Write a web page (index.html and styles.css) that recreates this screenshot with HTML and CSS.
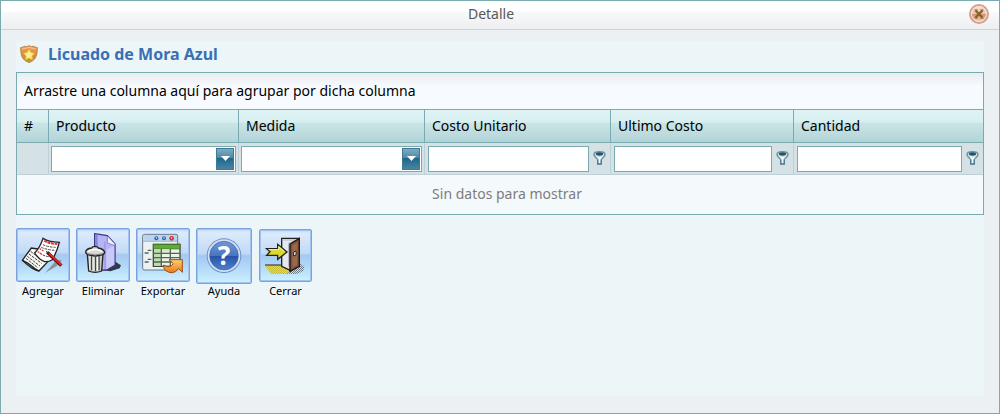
FILE: index.html
```html
<!DOCTYPE html>
<html lang="es">
<head>
  <meta charset="UTF-8" />
  <meta name="viewport" content="width=device-width, initial-scale=1" />
  <title>Detalle</title>
  <link rel="stylesheet" href="styles.css">
</head>
<body>

  <!-- Shared funnel icon for the filter row -->
  <svg class="sprites" aria-hidden="true">
    <symbol id="funnel" viewBox="0 0 13 14">
      <path d="M1 3.5C1 1.5 3.5 .8 6.5 .8S12 1.5 12 3.5C12 5.5 9.5 7.3 8.3 8.3V13H4.7V8.3C3.5 7.3 1 5.5 1 3.5Z" fill="#d3e2e8" stroke="#6d909f" stroke-width="1.4"/>
      <ellipse cx="6.5" cy="3" rx="3.6" ry="1.7" fill="#1d5570"/>
      <path d="M4.5 6L6.5 8L8.5 6M6.5 8V12" fill="none" stroke="#f4fafc" stroke-width="1.3"/>
      <path d="M4.7 9V13H8.3V9" fill="none" stroke="#4f7b8f" stroke-width="1.1"/>
    </symbol>
  </svg>

  <div class="dialog">
    <header class="titlebar">
      <h1>Detalle</h1>
      <button type="button" class="close" aria-label="Cerrar ventana">
        <svg viewBox="0 0 20 20" width="20" height="20" aria-hidden="true">
          <defs>
            <linearGradient id="closeFill" x1="0" y1="0" x2="0" y2="1">
              <stop offset="0" stop-color="#f6e4dd"/>
              <stop offset=".48" stop-color="#ecc3b3"/>
              <stop offset=".5" stop-color="#d08d74"/>
              <stop offset="1" stop-color="#f3d9ce"/>
            </linearGradient>
          </defs>
          <circle cx="10" cy="10" r="9" fill="url(#closeFill)" stroke="#d99f8b" stroke-width="2"/>
          <circle cx="10" cy="10" r="7.5" fill="none" stroke="#f7e6df" stroke-width="1"/>
          <path d="M6.5 6.5L13.5 13.5M13.5 6.5L6.5 13.5" stroke="#856222" stroke-width="2.2"/>
          <path d="M5.5 6H8.5M11.5 6H14.5M5.5 14H8.5M11.5 14H14.5" stroke="#856222" stroke-width="1"/>
        </svg>
      </button>
    </header>

    <main class="content">
      <h2 class="product">
        <svg viewBox="0 0 18 18" width="18" height="18" aria-hidden="true">
          <defs>
            <linearGradient id="shield" x1="0" y1="0" x2="0" y2="1">
              <stop offset="0" stop-color="#eda45c"/>
              <stop offset=".5" stop-color="#e08c38"/>
              <stop offset="1" stop-color="#b9982c"/>
            </linearGradient>
          </defs>
          <path d="M.7 2.5Q3 2.5 4.5 1.3Q6.5 2.3 9 .7Q11.5 2.3 13.5 1.3Q15 2.5 17.3 2.5C17.3 10 16 15.5 9 17.5C2 15.5 .7 10 .7 2.5Z" fill="url(#shield)" stroke="#bb8448" stroke-width="1"/>
          <path d="M2 4Q6 3.5 9 2.2Q12 3.5 16 4" fill="none" stroke="#f9c48a" stroke-width="1"/>
          <path d="M9 4.3L10.9 7.6L14.5 8.2L11.9 11L12.4 14.7L9 13L5.6 14.7L6.1 11L3.5 8.2L7.1 7.6Z" fill="#fbf08a" stroke="#e0bb45" stroke-width=".8"/>
        </svg>
        Licuado de Mora Azul
      </h2>

      <section class="grid">
        <div class="group-panel">Arrastre una columna aquí para agrupar por dicha columna</div>
        <table>
          <colgroup>
            <col class="col-num">
            <col class="col-producto">
            <col class="col-medida">
            <col class="col-unitario">
            <col class="col-ultimo">
            <col class="col-cantidad">
          </colgroup>
          <thead>
            <tr>
              <th scope="col">#</th>
              <th scope="col">Producto</th>
              <th scope="col">Medida</th>
              <th scope="col">Costo Unitario</th>
              <th scope="col">Ultimo Costo</th>
              <th scope="col">Cantidad</th>
            </tr>
            <tr class="filters">
              <td></td>
              <td>
                <div class="combo">
                  <select aria-label="Producto"><option></option></select>
                  <span class="combo-arrow"><svg viewBox="0 0 9 5" width="9" height="5" aria-hidden="true"><path d="M0 0H9L4.5 5Z" fill="#fff"/></svg></span>
                </div>
              </td>
              <td>
                <div class="combo">
                  <select aria-label="Medida"><option></option></select>
                  <span class="combo-arrow"><svg viewBox="0 0 9 5" width="9" height="5" aria-hidden="true"><path d="M0 0H9L4.5 5Z" fill="#fff"/></svg></span>
                </div>
              </td>
              <td>
                <div class="filter">
                  <input type="text" aria-label="Costo Unitario">
                  <button type="button" aria-label="Filtrar costo unitario"><svg width="13" height="14"><use href="#funnel"/></svg></button>
                </div>
              </td>
              <td>
                <div class="filter">
                  <input type="text" aria-label="Ultimo Costo">
                  <button type="button" aria-label="Filtrar ultimo costo"><svg width="13" height="14"><use href="#funnel"/></svg></button>
                </div>
              </td>
              <td>
                <div class="filter">
                  <input type="text" aria-label="Cantidad">
                  <button type="button" aria-label="Filtrar cantidad"><svg width="13" height="14"><use href="#funnel"/></svg></button>
                </div>
              </td>
            </tr>
          </thead>
          <tbody>
            <tr class="empty">
              <td colspan="6">Sin datos para mostrar</td>
            </tr>
          </tbody>
        </table>
      </section>

      <div class="toolbar">
        <button type="button" class="tool">
          <span class="tool-icon">
            <svg viewBox="0 0 156 156" aria-hidden="true">
              <path d="M84 132L118 94L135 94L118 112L90 128Z" fill="#8b93a0"/>
              <path d="M16 94L43 57L62 60L98 92L66 126Q48 124 16 94Z" fill="#f7f7f4" stroke="#222" stroke-width="4"/>
              <path d="M16 94Q34 101 43 110T66 126" fill="none" stroke="#222" stroke-width="4"/>
              <g stroke="#444" stroke-width="3" stroke-dasharray="8 3">
                <path d="M41 67L60 82M36 75L74 103M31 82L69 111M27 88L62 116"/>
              </g>
              <path d="M78 28Q92 39 127 40Q120 68 106 92Q98 98 83 98Q66 92 53 72Q70 54 78 28Z" fill="#fff" stroke="#222" stroke-width="4"/>
              <path d="M82 35Q95 44 121 45" fill="none" stroke="#d93636" stroke-width="6" stroke-dasharray="9 2"/>
              <g stroke="#444" stroke-width="3" stroke-dasharray="8 3" fill="none">
                <path d="M78 47Q91 54 116 55M73 55Q88 62 112 64M68 72Q82 83 104 84"/>
              </g>
              <path d="M68 59L82 67M62 68L75 76" stroke="#d93636" stroke-width="4" stroke-dasharray="5 3"/>
              <path d="M91 70L133 110" stroke="#5a0c0c" stroke-width="10"/>
              <path d="M95 72L133 108" stroke="#ee2020" stroke-width="6"/>
              <path d="M86 65L98 71L92 78Z" fill="#332"/>
            </svg>
          </span>
          <span class="tool-label">Agregar</span>
        </button>

        <button type="button" class="tool">
          <span class="tool-icon">
            <svg viewBox="0 0 156 156" aria-hidden="true">
              <path d="M115 98L132 109L128 118L100 127L80 124Z" fill="#333a44"/>
              <path d="M53 14L91 20L114 45V108L89 123L53 124Z" fill="#b5b4f4" stroke="#3a398c" stroke-width="4"/>
              <path d="M55 16L62 19V65H55Z" fill="#8784df"/>
              <path d="M88 62V121L112 107V50Z" fill="#cac9fa"/>
              <path d="M91 20V42L114 50V45Z" fill="#eeedff" stroke="#5b59b5" stroke-width="2"/>
              <path d="M84 38V119" stroke="#8f8de3" stroke-width="3"/>
              <path d="M31 76H78L74 126Q54 134 35 126Z" fill="#c7c9c4" stroke="#222" stroke-width="4"/>
              <path d="M43 82V124M55 84V127M66 82V124" stroke="#444" stroke-width="4"/>
              <path d="M39 82V123M51 84V126M62 83V125" stroke="#fff" stroke-width="3"/>
              <path d="M26 70Q27 59 44 57Q46 52 55 52Q63 53 64 57Q81 60 83 70Q82 79 55 81Q28 79 26 70Z" fill="#d8d9d4" stroke="#222" stroke-width="4"/>
              <path d="M33 68Q40 62 54 62Q67 62 75 68" fill="none" stroke="#fff" stroke-width="4"/>
              <path d="M30 74Q54 82 79 74" fill="none" stroke="#777" stroke-width="3"/>
            </svg>
          </span>
          <span class="tool-label">Eliminar</span>
        </button>

        <button type="button" class="tool">
          <span class="tool-icon">
            <svg viewBox="0 0 156 156" aria-hidden="true">
              <defs>
                <linearGradient id="orange" x1="0" y1="0" x2="0" y2="1">
                  <stop offset="0" stop-color="#ffcf75"/>
                  <stop offset="1" stop-color="#e87a18"/>
                </linearGradient>
              </defs>
              <rect x="17" y="16" width="105" height="107" rx="5" fill="#edf1f4" stroke="#647789" stroke-width="3"/>
              <path d="M19 18H120V36H19Z" fill="#b8d5eb"/>
              <path d="M18 37H121" stroke="#8199ac" stroke-width="2"/>
              <circle cx="58" cy="28" r="6" fill="#2c62b5"/>
              <circle cx="81" cy="28" r="6" fill="#2c62b5"/>
              <circle cx="104" cy="28" r="7" fill="#d82e3e"/>
              <circle cx="58" cy="27" r="2" fill="#fff"/>
              <circle cx="81" cy="27" r="2" fill="#fff"/>
              <circle cx="104" cy="27" r="2" fill="#fff"/>
              <path d="M32 64H43M23 72H35M32 91H43M23 99H35" stroke="#566" stroke-width="4"/>
              <rect x="49" y="46" width="80" height="66" fill="#eef3e8" stroke="#3f4b3c" stroke-width="4"/>
              <rect x="49" y="46" width="80" height="14" fill="#63a83c" stroke="#3f7424" stroke-width="2"/>
              <path d="M51 61H72V110H51Z" fill="#bcddb0"/>
              <path d="M73 61H100V73H73Z" fill="#d9e9d2"/>
              <path d="M50 73H128M50 86H128M50 99H128M73 60V111M100 60V111" stroke="#566455" stroke-width="4"/>
              <path d="M96 92H136V130L125 119Q107 142 82 122L80 108Q98 120 109 104Z" fill="url(#orange)" stroke="#a04f10" stroke-width="3"/>
            </svg>
          </span>
          <span class="tool-label">Exportar</span>
        </button>

        <button type="button" class="tool tool-help">
          <span class="tool-icon">
            <svg viewBox="0 0 162 162" aria-hidden="true">
              <defs>
                <linearGradient id="helpFill" x1="0" y1="0" x2="0" y2="1">
                  <stop offset="0" stop-color="#7598d4"/>
                  <stop offset=".5" stop-color="#4a74c0"/>
                  <stop offset=".52" stop-color="#2853a8"/>
                  <stop offset="1" stop-color="#4e80cc"/>
                </linearGradient>
              </defs>
              <circle cx="81" cy="80" r="52" fill="#6d8ec5"/>
              <circle cx="81" cy="80" r="49" fill="#d3e2f6"/>
              <circle cx="81" cy="80" r="43" fill="url(#helpFill)" stroke="#3562ae" stroke-width="2"/>
              <text x="81" y="107" class="help-mark">?</text>
            </svg>
          </span>
          <span class="tool-label">Ayuda</span>
        </button>

        <button type="button" class="tool tool-exit">
          <span class="tool-icon">
            <svg viewBox="0 0 153 153" aria-hidden="true">
              <defs>
                <pattern id="floor" width="6" height="6" patternUnits="userSpaceOnUse">
                  <rect width="6" height="6" fill="#e6e02a"/>
                  <path d="M0 0H3V3H0ZM3 3H6V6H3Z" fill="#c8bd35"/>
                </pattern>
                <pattern id="shade" width="6" height="6" patternUnits="userSpaceOnUse">
                  <path d="M0 0H3V3H0ZM3 3H6V6H3Z" fill="#6f7c8c"/>
                </pattern>
              </defs>
              <path d="M118 98L133 109L130 123L112 132H76L92 122Z" fill="url(#shade)"/>
              <path d="M17 105H62L93 123L78 132H34L17 112Z" fill="url(#floor)"/>
              <path d="M15 105H65" stroke="#222" stroke-width="3"/>
              <path d="M65 109V25H117V36L91 46V121Z" fill="#e6e8ef" stroke="#222" stroke-width="4"/>
              <path d="M70 30H110L86 40V110" fill="none" stroke="#aeb4c4" stroke-width="3"/>
              <path d="M90 42L118 25V109L90 124Z" fill="#80523c" stroke="#24160f" stroke-width="4"/>
              <path d="M97 46L112 37V104L97 113Z" fill="#96684c"/>
              <path d="M101 66L108 63V75L101 78Z" fill="#fff" stroke="#222" stroke-width="3"/>
              <path d="M20 56L30 65L20 76H53V88L81 66L53 43V56Z" fill="#ddd92b" stroke="#222" stroke-width="4"/>
              <path d="M25 59H56V50L73 64" fill="none" stroke="#f8f6a4" stroke-width="3"/>
            </svg>
          </span>
          <span class="tool-label">Cerrar</span>
        </button>
      </div>
    </main>
  </div>

</body>
</html>
```
FILE: styles.css
```css
* {
  box-sizing: border-box;
}

body {
  margin: 0;
  font-family: "Noto Sans", Tahoma, sans-serif;
  font-size: 14px;
  line-height: 20px;
  color: #000;
}

button {
  padding: 0;
  border: none;
  background: none;
  font: inherit;
  color: inherit;
  cursor: pointer;
}

svg {
  display: block;
}

.sprites {
  display: none;
}

.dialog {
  display: flex;
  flex-direction: column;
  min-height: 100vh;
  border: 1px solid #7aabb1;
  background-color: #ebf0f3;
}

/* Title bar */
.titlebar {
  display: grid;
  grid-template-columns: 20px 1fr 20px;
  align-items: center;
  height: 29px;
  padding: 0 10px 2px;
  border-bottom: 1px solid #d0d3d5;
  background: linear-gradient(#fff 11px, #f8f9fa 11px, #edeff1);
}

.titlebar h1 {
  grid-column: 2;
  margin: 0;
  padding-right: 18px;
  font-size: 14px;
  font-weight: normal;
  text-align: center;
  color: #585858;
}

.content {
  flex: 1;
  margin: 11px 15px 17px;
  background-color: #ecf6f9;
}

.product {
  display: flex;
  align-items: center;
  gap: 10px;
  height: 31px;
  margin: 0;
  padding: 0 4px 5px;
  font-size: 16px;
  color: #3a6fb3;
}

/* Grid */
.grid {
  border: 1px solid #7aabb1;
}

.group-panel {
  height: 36px;
  padding: 8px 7px;
  background: linear-gradient(#e9edf0, #f7fbff 14px);
}

table {
  width: 100%;
  table-layout: fixed;
  border-collapse: separate;
  border-spacing: 0;
}

.col-num { width: 32px; }
.col-producto { width: 190px; }
.col-medida { width: 186px; }
.col-unitario { width: 186px; }
.col-ultimo { width: 183px; }
.col-cantidad { width: 189px; }

th {
  height: 34px;
  padding: 0 7px;
  border: solid #7aabb1;
  border-width: 1px 1px 1px 0;
  background: linear-gradient(#dff3f5, #d8eff0 12px, #c9e5e7 13px, #b3d4d7);
  font-weight: normal;
  text-align: left;
}

.filters td {
  height: 32px;
  padding: 2px;
  border: solid #bfd0d8;
  border-width: 0 1px 1px 0;
  background-color: #d4e2e6;
}

th:last-child,
.filters td:last-child {
  border-right: none;
}

.combo {
  position: relative;
}

.combo select,
.filter input {
  display: block;
  width: 100%;
  height: 26px;
  padding: 0 4px;
  border: 1px solid #7aabb1;
  border-radius: 0;
  background-color: #fff;
  font: inherit;
  appearance: none;
}

.combo-arrow {
  position: absolute;
  top: 2px;
  right: 2px;
  bottom: 2px;
  display: flex;
  align-items: center;
  justify-content: center;
  width: 18px;
  border: 1px solid #3b7b98;
  background: linear-gradient(#7eabc2, #5187a5 45%, #20658a 46%, #4686a3);
  pointer-events: none;
}

.filter {
  display: flex;
  align-items: center;
  gap: 4px;
  padding: 0 2px 0 1px;
}

.filter input {
  flex: 1;
  min-width: 0;
}

.filter button {
  padding-bottom: 2px;
}

.empty td {
  height: 39px;
  padding: 0 0 2px 14px;
  background-color: #f4f9fc;
  text-align: center;
  color: #7d7d7d;
}

/* Toolbar */
.toolbar {
  display: flex;
  align-items: flex-start;
  gap: 6px;
  padding-top: 13px;
}

.tool {
  width: 54px;
}

.tool-icon {
  display: block;
  height: 54px;
  border: 1px solid #7ba3dd;
  border-radius: 2px;
  background: linear-gradient(#c5dcfa, #dceafc 4px, #c2daf6 45%, #a5c8f0 50%, #b5dcf9 75%, #cdf1ff);
  box-shadow: inset 0 0 0 1px #9fc2f0;
}

.tool-label {
  display: block;
  font-size: 11px;
  line-height: 18px;
}

.tool-help {
  width: 56px;
}

.tool-help .tool-icon {
  height: 56px;
}

.tool-help .tool-label {
  line-height: 14px;
}

.tool-exit {
  width: 53px;
  margin: 1px;
}

.tool-exit .tool-icon {
  height: 53px;
}

.help-mark {
  fill: #fff;
  font-size: 78px;
  font-weight: bold;
  text-anchor: middle;
}
```
